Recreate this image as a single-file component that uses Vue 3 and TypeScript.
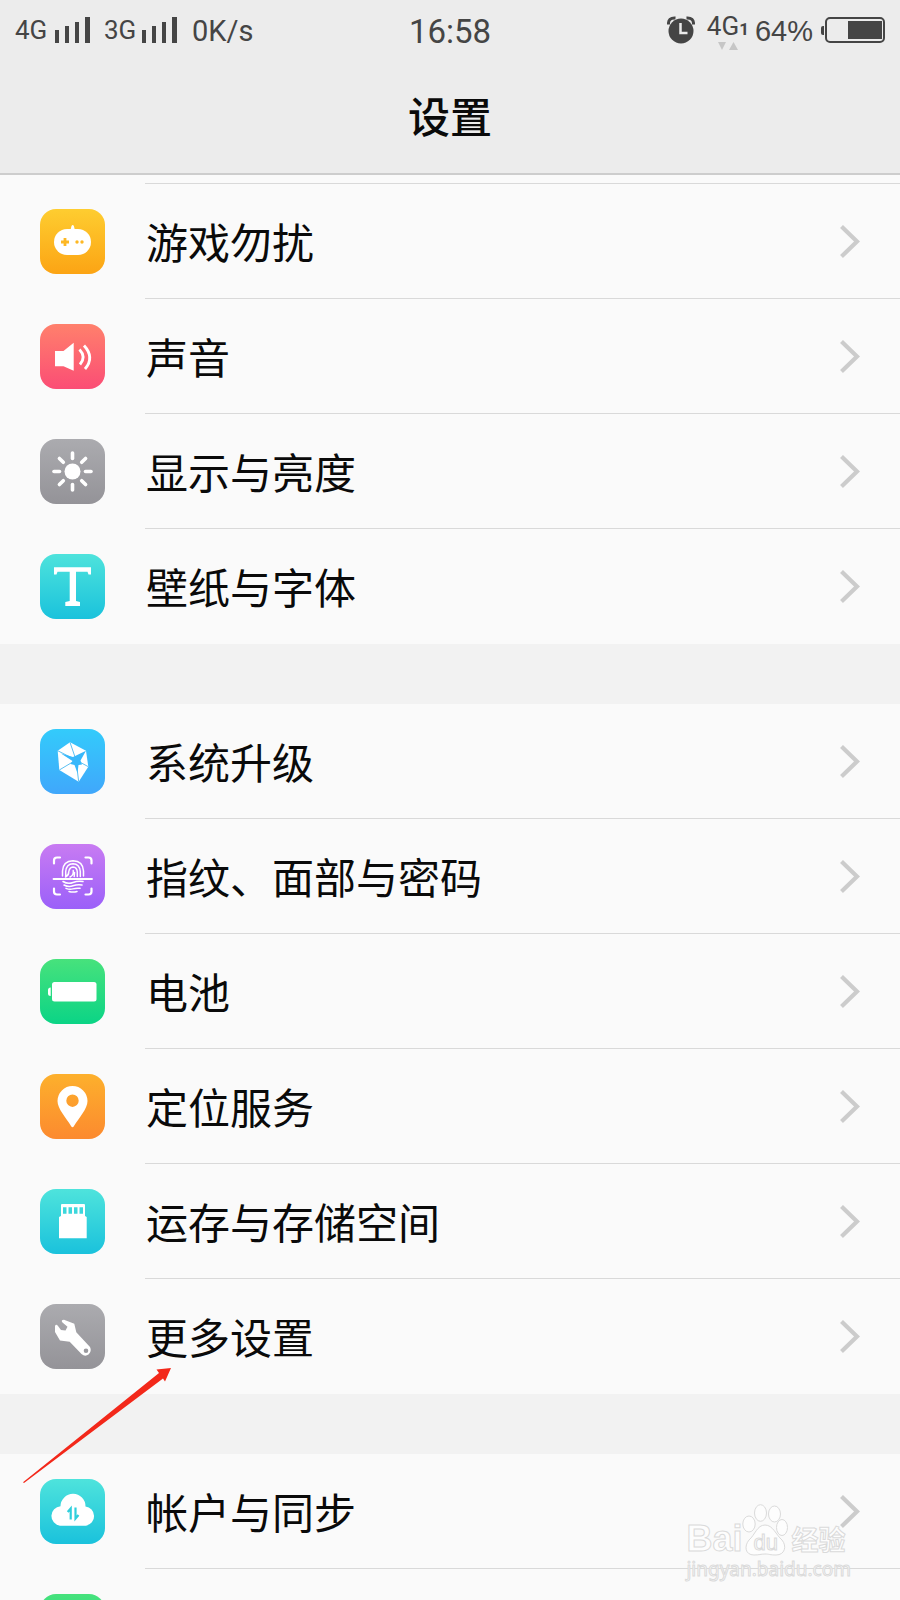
<script setup lang="ts">
type IconName =
  | 'game' | 'sound' | 'sun' | 'font' | 'crystal' | 'finger'
  | 'battery' | 'pin' | 'card' | 'wrench' | 'cloud' | 'blank'

interface Item {
  label: string
  icon: IconName
  tone: string
  pointed?: boolean
}

const groups: Item[][] = [
  [
    { label: '游戏勿扰', icon: 'game', tone: 'yellow' },
    { label: '声音', icon: 'sound', tone: 'red' },
    { label: '显示与亮度', icon: 'sun', tone: 'gray' },
    { label: '壁纸与字体', icon: 'font', tone: 'teal' },
  ],
  [
    { label: '系统升级', icon: 'crystal', tone: 'blue' },
    { label: '指纹、面部与密码', icon: 'finger', tone: 'purple' },
    { label: '电池', icon: 'battery', tone: 'green' },
    { label: '定位服务', icon: 'pin', tone: 'orange' },
    { label: '运存与存储空间', icon: 'card', tone: 'teal' },
    { label: '更多设置', icon: 'wrench', tone: 'gray', pointed: true },
  ],
  [
    { label: '帐户与同步', icon: 'cloud', tone: 'teal' },
    { label: '', icon: 'blank', tone: 'green' },
  ],
]

const rays = [0, 45, 90, 135, 180, 225, 270, 315]
</script>

<template>
  <div class="screen">
    <header class="header">
      <div class="status">
        <div class="side">
          <span class="net">4G</span>
          <svg class="bars" width="35" height="26" viewBox="0 0 35 26"><path d="M0 13h4v13H0zM10 9h4v17h-4zM20 5h4v21h-4zM30 0h5v26h-5z" /></svg>
          <span class="net second">3G</span>
          <svg class="bars" width="35" height="26" viewBox="0 0 35 26"><path d="M0 13h4v13H0zM10 9h4v17h-4zM20 5h4v21h-4zM30 0h5v26h-5z" /></svg>
          <span class="speed">0K/s</span>
        </div>
        <time class="clock">16:58</time>
        <div class="side end">
          <svg width="28" height="28" viewBox="0 0 28 28">
            <circle cx="14" cy="15" r="12.5" fill="#454545" />
            <path d="M1.5 8.500Q1 1.500 8.500 2M26.500 8.500Q27 1.500 19.500 2" fill="none" stroke="#454545" stroke-width="3" />
            <path d="M13.500 7v10h7" fill="none" stroke="#ececec" stroke-width="2.5" />
          </svg>
          <span class="data">
            <span class="net">4G<b class="sim">1</b></span>
            <svg class="updown" width="20" height="8" viewBox="0 0 20 8"><path d="M0 0h8L4 8zM11 8h9l-4.500-8z" fill="#c6c6c6" /></svg>
          </span>
          <span class="percent">64%</span>
          <svg width="64" height="26" viewBox="0 0 64 26">
            <rect x="5" y="1" width="58" height="24" rx="4" fill="none" stroke="#454545" stroke-width="2" />
            <path d="M27 4h34v18H27z" fill="#454545" />
            <path d="M3 9v9H2q-2 0-2-2v-5q0-2 2-2z" fill="#454545" />
          </svg>
        </div>
      </div>
      <h1 class="title">设置</h1>
    </header>

    <main class="list">
      <div class="tail"></div>
      <ul v-for="(group, g) in groups" :key="g" class="group">
        <li v-for="item in group" :key="item.icon" class="item">
          <button type="button" class="row">
            <span class="tile" :class="item.tone">
              <svg width="65" height="65" viewBox="0 0 65 65" fill="#fff">
                <template v-if="item.icon === 'game'">
                  <rect x="14" y="20" width="37" height="26" rx="13" />
                  <path d="M30.500 21l1-4q1.200-2 2.400 0l1 4z" />
                  <path d="M25 29v8M21 33h8" stroke="#fdb824" stroke-width="2.8" />
                  <circle cx="37" cy="33" r="1.7" fill="#fdb824" /><circle cx="42" cy="33" r="1.7" fill="#fdb824" />
                </template>
                <template v-else-if="item.icon === 'sound'">
                  <path d="M15 27h8.500L33.700 18.700v28L23.500 42.300H15z" />
                  <path d="M39.500 25.500Q46.500 33 40 40.500M44 21.500Q55 33.500 45 45" fill="none" stroke="#fff" stroke-width="2.8" />
                </template>
                <template v-else-if="item.icon === 'sun'">
                  <circle cx="32.5" cy="32.5" r="8" />
                  <path v-for="r in rays" :key="r" d="M45.500 32.500h5.500" :transform="`rotate(${r} 32.5 32.5)`" stroke="#fff" stroke-width="3.6" stroke-linecap="round" />
                </template>
                <path v-else-if="item.icon === 'font'" d="M14 13.300h37v7.200h-2.500l-1-2.700H36V47l4 1v4H25.300v-4l4.400-1V17.800H17.500l-1 2.700H14z" />
                <template v-else-if="item.icon === 'crystal'">
                  <path d="M30 13.300L46 21.700L48.300 37.700L38.700 52.700L19.300 41L17.700 21.700z" />
                  <path d="M36 31L30 13.300M36 31L48.300 37.700M36 31L38.700 52.700M36 31L19.300 41M36 31L17.700 21.700" stroke="#5cc0f2" stroke-width="1" />
                  <path d="M21 24.500L33 28L46 21.700L40.500 31.500L42 35.500L38.500 36L37.500 44L34.500 36L30.500 35L32.500 32z" fill="#38b8fb" />
                </template>
                <g v-else-if="item.icon === 'finger'" fill="none" stroke="#fff" stroke-linecap="round">
                  <path d="M14 19.500v-3q0-3 3-3h3M45.500 13.500h3q3 0 3 3v3M51.500 44.500v3q0 3-3 3h-3M20 50.500h-3q-3 0-3-3v-3" stroke-width="2.2" />
                  <path d="M13.500 35h38.500" stroke-width="1.8" />
                  <path d="M22.500 32V27Q23 17 33 16.700Q43 17 43.500 27v5M25.700 32.500V27.500Q26.500 20 33 19.800Q39.500 20 40.300 27.500V32.500M25.500 33Q29 31 28.700 28Q29.500 23 33 22.900Q37 23 37.300 28V32.500M30 33q4-2 3.200-6.500M34.200 32.500l.3-4" stroke-width="1.5" />
                  <path d="M23 37.500q5 3 10 1t10-1M24 41q4.500 2.500 9 .8t9-.8M26 44.300q3.500 1.700 7 .6t7-.6M29 47.500q4 1.200 8 0" stroke-width="1.5" />
                </g>
                <template v-else-if="item.icon === 'battery'">
                  <rect x="12" y="23" width="44.500" height="19.500" rx="2.5" />
                  <path d="M10.700 28.500v8.500q-2.700 0-2.700-2.500v-3.500q0-2.500 2.700-2.500z" />
                </template>
                <path v-else-if="item.icon === 'pin'" fill-rule="evenodd" d="M32.500 12a15 15 0 0 1 15 15C47.500 35 39 43.500 34 52Q32.500 54.500 31 52C26 43.500 17.500 35 17.500 27a15 15 0 0 1 15-15zM32.500 20.500a6.200 6.200 0 1 0 0 12.400a6.200 6.200 0 1 0 0-12.400z" />
                <path v-else-if="item.icon === 'card'" fill-rule="evenodd" d="M21 16q0-1 1-1h22q1 0 1 1v11l1.700 1V49.300H19V28l2-1zM23 18.300v6.500h3.500v-6.500zM28.500 18.300v6.500H32v-6.500zM34 18.300v6.500h3.500v-6.500zM39.500 18.300v6.500H43v-6.500z" />
                <path v-else-if="item.icon === 'wrench'" fill-rule="evenodd" d="M22.500 18.500Q20.500 16 24 15.700L34.300 19.700L36.300 28.300L50 43Q52 47 48.500 50.500Q45 53 41.500 50L29.700 37.700L20 36.500L15 28V22Q16 19.500 18 22L21 26L25.500 26.500L27.500 22.700zM46 44.500a2.300 2.300 0 1 0 0 4.600a2.300 2.300 0 1 0 0-4.600z" />
                <template v-else-if="item.icon === 'cloud'">
                  <path d="M20 46.700A9.800 9.800 0 0 1 20.500 27.200A12.500 12.500 0 0 1 45.500 27.500A9.700 9.700 0 0 1 46 46.700z" />
                  <path d="M30.700 40.500V29.500L27.700 33M35.500 28.500V39.500L38.500 36" fill="none" stroke="#2fcfdc" stroke-width="2.2" />
                </template>
              </svg>
            </span>
            <span class="label">{{ item.label }}</span>
            <svg class="chevron" width="20" height="34" viewBox="0 0 20 34"><path d="M1.500 1.500L17 16.500L1.500 31.500" fill="none" stroke="#cccccc" stroke-width="4.2" /></svg>
          </button>
          <svg v-if="item.pointed" class="pointer" width="150" height="116" viewBox="0 0 150 116">
            <path d="M0 114.300L136 5L133.500 1.500L148 0L142 13.500L140 10.500L1 115z" fill="#f3281a" />
          </svg>
        </li>
      </ul>
    </main>

    <div class="mark">
      <div class="brand">
        <span class="bai">Bai</span>
        <span class="paw">
          <svg width="46" height="52" viewBox="0 0 46 52" fill="#fdfdfd" stroke="#dadada">
            <ellipse cx="7" cy="20" rx="6.200" ry="8" /><ellipse cx="18.500" cy="9" rx="6" ry="8.300" />
            <ellipse cx="32.500" cy="10" rx="6" ry="8" /><ellipse cx="40" cy="23.500" rx="5.500" ry="8" />
            <path d="M23 21C31 21 34 31 40 36C45 42 43 51 34 51C28 51 27 50 23 50S17 51 12 51C3 51 2 42 7 36C13 31 15 21 23 21z" />
          </svg>
          <span class="du">du</span>
        </span>
        <span class="jy">经验</span>
      </div>
      <div class="site">jingyan.baidu.com</div>
    </div>
  </div>
</template>

<style>
body {
  margin: 0;
  background: #fafafa;
}
</style>

<style scoped>
.screen {
  position: relative;
  display: flex;
  flex-direction: column;
  height: 100vh;
  overflow: hidden;
  background: #fafafa;
  color: #0a0a0a;
  font-family: Roboto, "Noto Sans CJK SC", sans-serif;
}
.header {
  flex: none;
  background: #ececec;
  border-bottom: 2px solid #cdcdcd;
}
.status {
  display: grid;
  grid-template-columns: 1fr auto 1fr;
  align-items: center;
  height: 60px;
  padding: 0 15px;
  color: #454545;
}
.side {
  display: flex;
  align-items: center;
  white-space: nowrap;
}
.end {
  justify-content: flex-end;
}
.net {
  font-size: 26px;
  line-height: 30px;
}
.side > .net {
  width: 40px;
}
.side > .second {
  width: 38px;
  margin-left: 14px;
}
.bars {
  fill: #454545;
}
.speed {
  margin-left: 15px;
  padding-top: 2px;
  font-size: 29px;
}
.clock {
  padding-top: 2px;
  font-size: 33px;
}
.data {
  position: relative;
  margin: 0 6px 6px 12px;
}
.sim {
  font-size: 17px;
}
.updown {
  position: absolute;
  left: 11px;
  bottom: -6px;
}
.percent {
  margin-right: 8px;
  padding-top: 2px;
  font-family: "Liberation Sans", sans-serif;
  font-size: 29px;
}
.title {
  margin: 0;
  padding-bottom: 3px;
  font-family: "Noto Sans CJK SC", sans-serif;
  font-size: 42px;
  font-weight: 500;
  line-height: 110px;
  text-align: center;
}
.list {
  flex: 1;
  min-height: 0;
  overflow: hidden;
}
.tail {
  height: 8px;
  margin-left: 145px;
  border-bottom: 1px solid #d9d9d9;
}
.group {
  margin: 0;
  padding: 0;
  list-style: none;
}
.group + .group {
  border-top: 60px solid #f2f2f2;
}
.item {
  position: relative;
}
.item:not(:last-child)::after {
  content: "";
  display: block;
  height: 1px;
  margin: -1px 0 0 145px;
  background: #d9d9d9;
}
.row {
  display: flex;
  align-items: center;
  width: 100%;
  height: 115px;
  padding: 0 40px;
  border: 0;
  background: none;
  color: inherit;
  font-family: "Noto Sans CJK SC", sans-serif;
  font-size: 42px;
  text-align: left;
}
.tile {
  flex: none;
  width: 65px;
  height: 65px;
  border-radius: 16px;
}
.tile svg {
  display: block;
}
.label {
  flex: 1;
  margin-left: 41px;
  padding-bottom: 2px;
  line-height: 60px;
}
.chevron {
  flex: none;
}
.yellow { background: linear-gradient(#fecd30, #fca414); }
.red { background: linear-gradient(#ff806c, #fb4d75); }
.gray { background: linear-gradient(#ababaf, #949398); }
.teal { background: linear-gradient(#4ee3dc, #1ac2dc); }
.blue { background: linear-gradient(#33cbfb, #40a7fb); }
.purple { background: linear-gradient(#c87bf2, #9b60f9); }
.green { background: linear-gradient(#47e27c, #0bd486); }
.orange { background: linear-gradient(#fdb02c, #fc8a2f); }
.pointer {
  position: absolute;
  z-index: 1;
  left: 23px;
  top: 89px;
}
.mark {
  position: absolute;
  right: 49px;
  bottom: 18px;
  color: #fdfdfd;
  -webkit-text-stroke: 1px #dadada;
}
.brand {
  display: flex;
  align-items: flex-end;
  height: 52px;
}
.bai {
  font-family: "Liberation Sans", sans-serif;
  font-size: 36px;
  font-weight: 700;
  line-height: 34px;
}
.paw {
  position: relative;
  height: 52px;
}
.du {
  position: absolute;
  left: 11px;
  bottom: 2px;
  font-family: "Liberation Sans", sans-serif;
  font-size: 22px;
  line-height: 22px;
}
.jy {
  margin-left: 3px;
  padding-bottom: 2px;
  font-family: "Noto Sans CJK SC", sans-serif;
  font-size: 27px;
  font-weight: 700;
  line-height: 30px;
}
.site {
  font-family: "Noto Sans", sans-serif;
  font-size: 19px;
  line-height: 26px;
}
</style>
